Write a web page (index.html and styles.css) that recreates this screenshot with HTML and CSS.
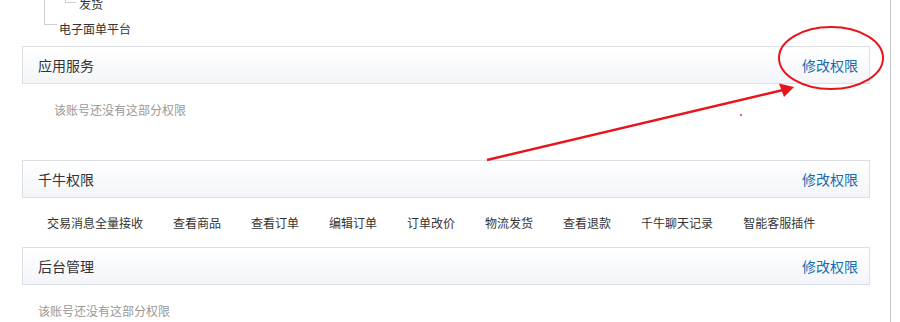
FILE: index.html
```html
<!DOCTYPE html>
<html lang="zh-CN">
<head>
<meta charset="utf-8">
<title>权限</title>
<link rel="stylesheet" href="styles.css">
</head>
<body>
<div class="page">
  <div class="tree">
    <div class="tree-row level2">发货</div>
    <div class="tree-row level1">电子面单平台</div>
  </div>

  <div class="section">
    <div class="sec-head"><span class="sec-title">应用服务</span><a class="sec-link" href="#">修改权限</a></div>
    <div class="sec-body note note-indent">该账号还没有这部分权限</div>
  </div>

  <div class="section">
    <div class="sec-head"><span class="sec-title">千牛权限</span><a class="sec-link" href="#">修改权限</a></div>
    <ul class="sec-body perms">
      <li>交易消息全量接收</li>
      <li>查看商品</li>
      <li>查看订单</li>
      <li>编辑订单</li>
      <li>订单改价</li>
      <li>物流发货</li>
      <li>查看退款</li>
      <li>千牛聊天记录</li>
      <li>智能客服插件</li>
    </ul>
  </div>

  <div class="section">
    <div class="sec-head"><span class="sec-title">后台管理</span><a class="sec-link" href="#">修改权限</a></div>
    <div class="sec-body note note-flat">该账号还没有这部分权限</div>
  </div>

  <svg class="marks" width="900" height="322" viewBox="0 0 900 322" aria-hidden="true">
    <ellipse cx="831" cy="62" rx="52" ry="31" fill="none" stroke="#e8141b" stroke-width="2"/>
    <line x1="487" y1="164" x2="783" y2="94" stroke="#e8141b" stroke-width="2.4"/>
    <polygon points="794,91 779,87.5 784,101" fill="#e8141b"/>
    <circle cx="741" cy="119" r="0.9" fill="#e8141b"/>
  </svg>
</div>
</body>
</html>
```

FILE: styles.css
```css
html, body {
  margin: 0;
  padding: 0;
  background: #fff;
}

body {
  font-family: "Noto Sans CJK SC", "Noto Sans", sans-serif;
  color: #333;
  overflow: hidden;
}

.page {
  position: relative;
  width: 891px;
  min-height: 322px;
  box-sizing: border-box;
  border-right: 1px solid #c9c9c9;
  padding: 0 0 0 22px;
}

/* tree */
.tree {
  margin: -4px 0 9px -22px;
  font-size: 12px;
  line-height: 16px;
}

.tree-row {
  position: relative;
  height: 16px;
}

.tree-row::before {
  content: "";
  position: absolute;
  border-left: 1px solid #cfcfcf;
  border-bottom: 1px solid #cfcfcf;
}

.level2 {
  padding-left: 79px;
}

.level2::before {
  left: 65px;
  top: -10px;
  width: 10px;
  height: 16px;
}

.level1 {
  margin-top: 9px;
  padding-left: 59px;
}

.level1::before {
  left: 44px;
  top: -31px;
  width: 12px;
  height: 34px;
}

/* sections */
.section {
  width: 848px;
}

.sec-head {
  height: 36px;
  box-sizing: content-box;
  border: 1px solid #dcdfe4;
  background: linear-gradient(#ffffff, #f3f5f9);
  display: flex;
  align-items: center;
  justify-content: space-between;
  padding: 0 11px 0 15px;
}

.sec-title {
  font-size: 14px;
  color: #333;
}

.sec-link {
  font-size: 14px;
  color: #166cb2;
  text-decoration: none;
}

.sec-body {
  margin: 0;
  font-size: 12px;
  line-height: 20px;
}

.note {
  color: #999;
}

.note-indent {
  padding: 16px 0 40px 32px;
}

.note-flat {
  padding: 16px 0 20px 16px;
}

.perms {
  list-style: none;
  display: flex;
  gap: 30px;
  padding: 15px 0 14px 25px;
  color: #333;
}

.perms li {
  white-space: nowrap;
}

/* annotation overlay */
.marks {
  position: absolute;
  left: 0;
  top: 0;
  pointer-events: none;
}
```
